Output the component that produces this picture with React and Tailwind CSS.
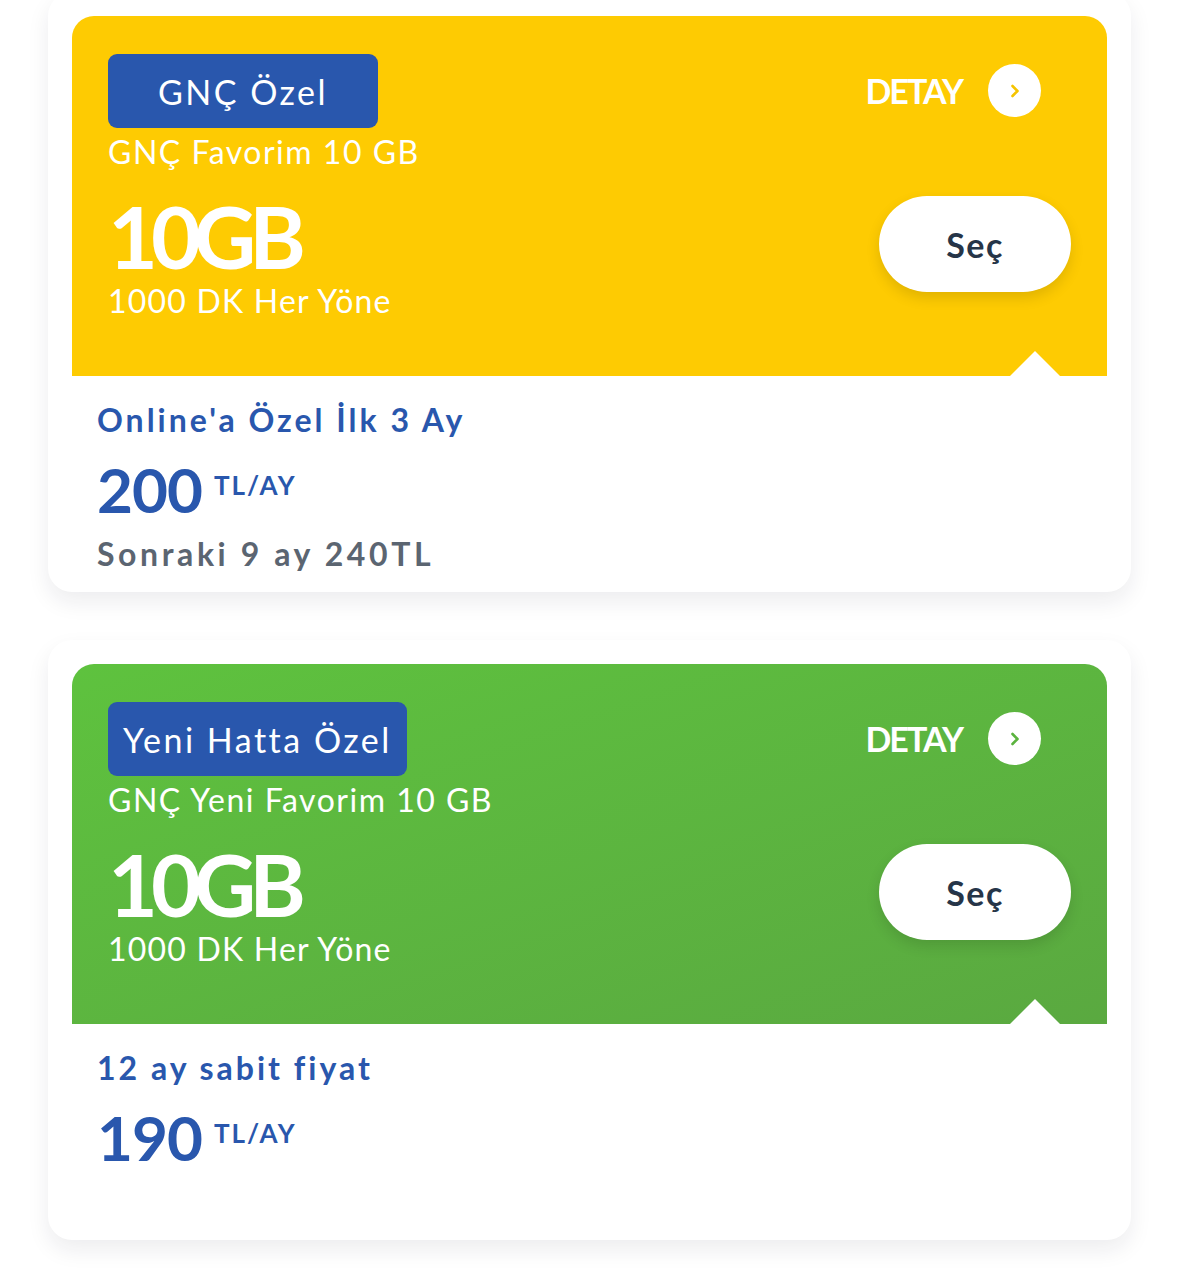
import React from "react";

const plans = [
  {
    badge: "GNÇ Özel",
    badgeClass: "min-w-[270px] justify-center",
    name: "GNÇ Favorim 10 GB",
    data: "10GB",
    minutes: "1000 DK Her Yöne",
    panelClass: "bg-[#fecb02]",
    accent: "#f5c400",
    promo: "Online'a Özel İlk 3 Ay",
    price: "200",
    after: "Sonraki 9 ay 240TL",
  },
  {
    badge: "Yeni Hatta Özel",
    badgeClass: "px-[15px]",
    name: "GNÇ Yeni Favorim 10 GB",
    data: "10GB",
    minutes: "1000 DK Her Yöne",
    panelClass: "bg-gradient-to-br from-[#5ec23e] to-[#5aa940]",
    accent: "#5bb33f",
    promo: "12 ay sabit fiyat",
    price: "190",
    after: null,
  },
];

function Chevron({ color }) {
  return (
    <svg width="12" height="16" viewBox="0 0 12 16" fill="none">
      <path
        d="M3.5 3l5 5-5 5"
        stroke={color}
        strokeWidth="2.6"
        strokeLinecap="round"
        strokeLinejoin="round"
      />
    </svg>
  );
}

function PlanCard({ plan }) {
  return (
    <div className="bg-white rounded-[24px] h-[600px] p-[24px] pb-0 shadow-[0_10px_22px_rgba(20,30,50,0.08)] flex flex-col">
      {/* colored top */}
      <div
        className={`relative ${plan.panelClass} rounded-t-[22px] h-[360px] pl-[36px] pr-[36px] pt-[38px] flex justify-between`}
      >
        <div className="flex flex-col items-start">
          <div
            className={`flex items-center h-[74px] rounded-[9px] bg-[#2957ad] text-white text-[34px] tracking-[2.5px] ${plan.badgeClass}`}
          >
            {plan.badge}
          </div>
          <div className="text-white text-[32px] leading-[40px] tracking-[1.5px] mt-[4px]">
            {plan.name}
          </div>
          <div className="text-white text-[86px] font-bold leading-[72px] tracking-[-7px] mt-[28px]">
            {plan.data}
          </div>
          <div className="text-white text-[32px] leading-[36px] tracking-[1.2px] mt-[11px]">
            {plan.minutes}
          </div>
        </div>

        <div className="flex flex-col items-end">
          <div className="flex items-center gap-[26px] mr-[30px] mt-[10px]">
            <span className="text-white text-[34px] font-bold tracking-[-2px]">
              DETAY
            </span>
            <span className="w-[53px] h-[53px] rounded-full bg-white flex items-center justify-center">
              <Chevron color={plan.accent} />
            </span>
          </div>
          <button className="mt-[79px] w-[192px] h-[96px] rounded-full bg-white text-[#263548] text-[34px] font-bold tracking-[1.5px] shadow-[0_6px_14px_rgba(0,0,0,0.12)]">
            Seç
          </button>
        </div>

        {/* notch */}
        <div className="absolute bottom-0 right-[47px] w-0 h-0 border-l-[25px] border-r-[25px] border-b-[25px] border-l-transparent border-r-transparent border-b-white" />
      </div>

      {/* pricing */}
      <div className="pl-[25px] pt-[22px] flex flex-col items-start">
        <div className="text-[#2957ad] text-[32px] font-bold tracking-[3px] leading-[44px]">
          {plan.promo}
        </div>
        <div className="flex items-start mt-[16px]">
          <span className="text-[#2957ad] text-[62px] font-bold leading-[62px] tracking-[-1px]">
            {plan.price}
          </span>
          <span className="text-[#2957ad] text-[26px] font-bold tracking-[2px] ml-[12px] mt-[12px] leading-[30px]">
            TL/AY
          </span>
        </div>
        {plan.after && (
          <div className="text-[#5b6571] text-[32px] font-bold tracking-[3.6px] leading-[44px] mt-[12px]">
            {plan.after}
          </div>
        )}
      </div>
    </div>
  );
}

export default function App() {
  return (
    <div
      className="w-[1179px] h-[1270px] bg-white overflow-hidden"
      style={{ fontFamily: "Lato, 'Noto Sans', sans-serif" }}
    >
      <div className="mx-[48px] mt-[-8px] flex flex-col gap-[48px]">
        {plans.map((p) => (
          <PlanCard key={p.price} plan={p} />
        ))}
      </div>
    </div>
  );
}
